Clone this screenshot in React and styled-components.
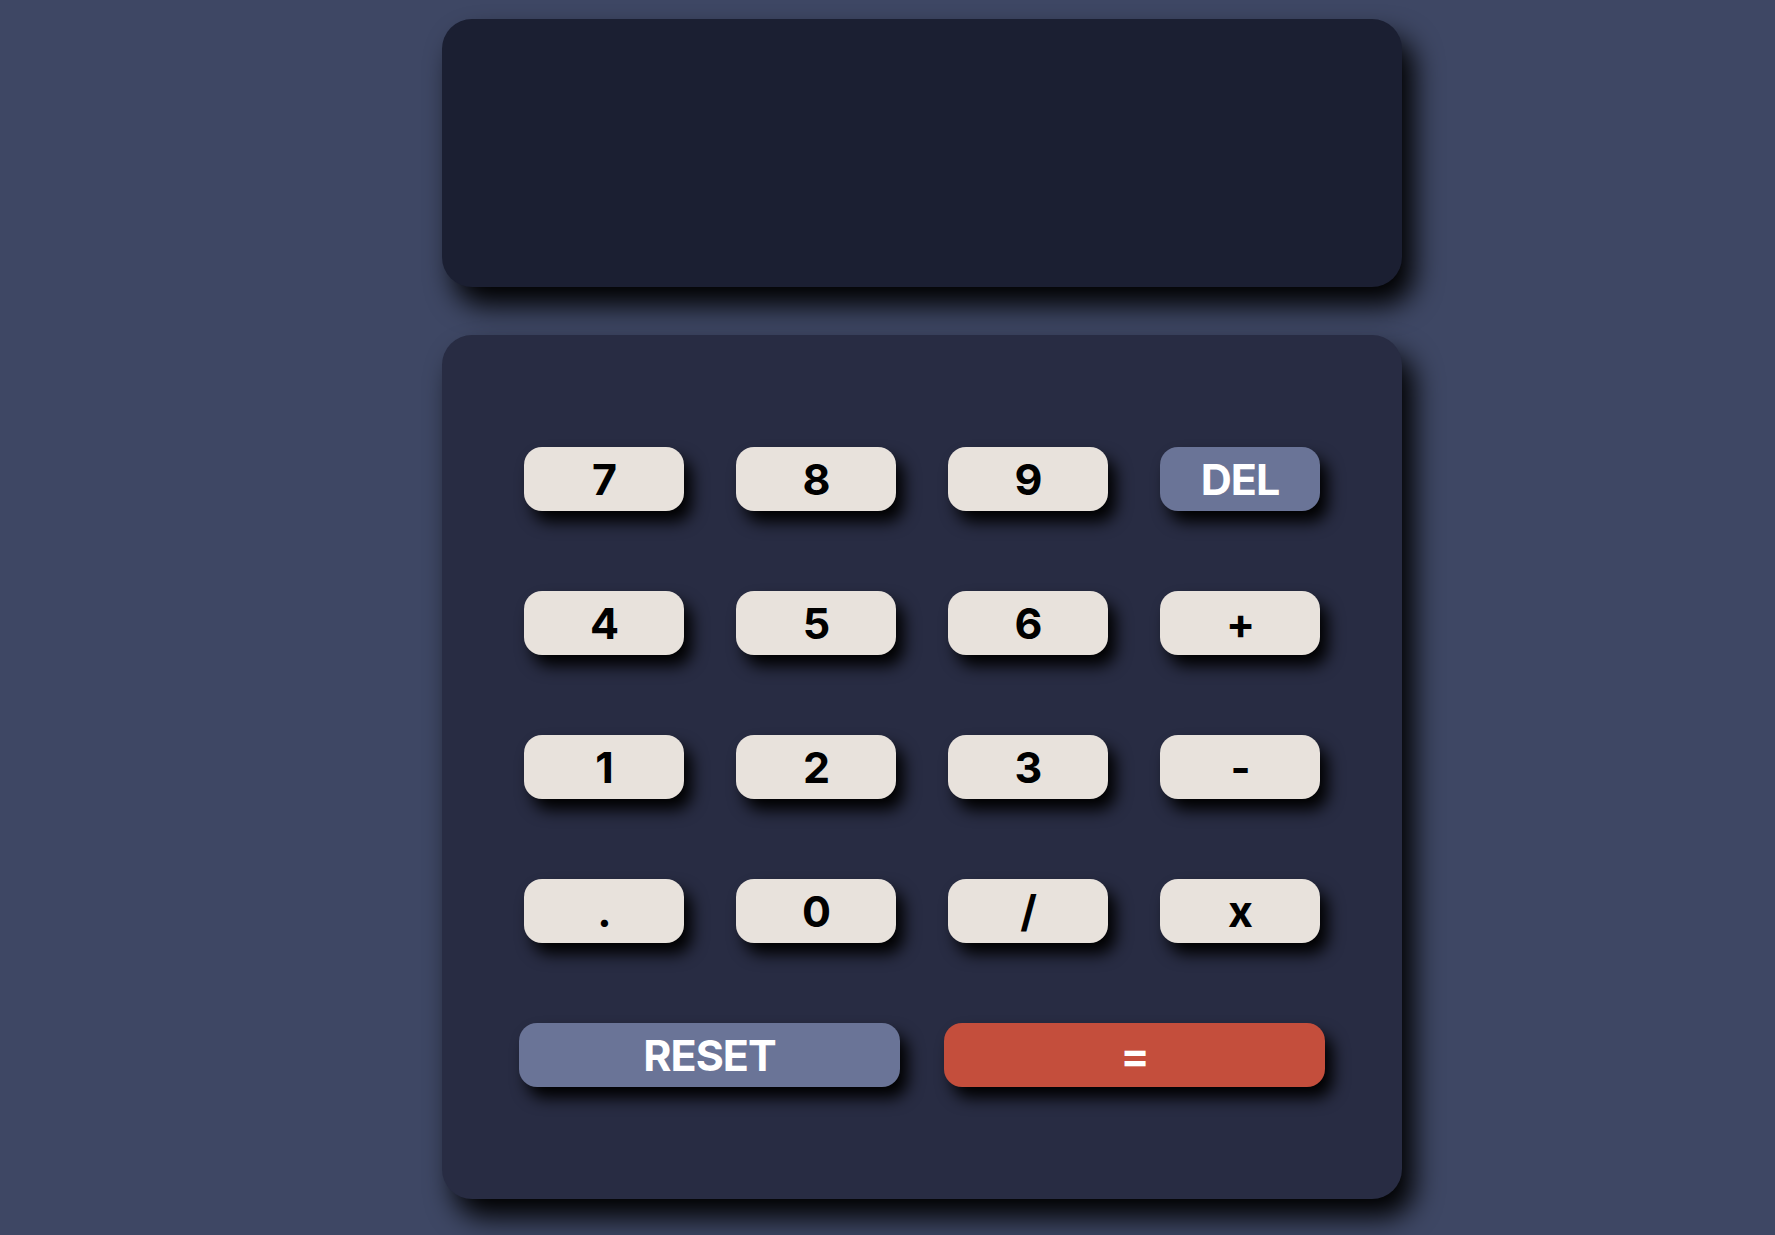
import React from 'react';
import styled, { createGlobalStyle } from 'styled-components';

const GlobalStyle = createGlobalStyle`
    * {
        box-sizing: border-box;
    }
    body {
        margin: 0;
        background: #3e4764;
        font-family: Inter, "Liberation Sans", sans-serif;
    }
`;

const Page = styled.main`
    display: flex;
    flex-direction: column;
    align-items: center;
    gap: 48px;
    padding: 19px 0 0 69px;
    min-height: 1235px;
`;

const Screen = styled.section`
    width: 960px;
    height: 268px;
    background: #1b1f32;
    border-radius: 30px;
    box-shadow: 12px 18px 28px #000;
`;

const Keypad = styled.section`
    display: flex;
    flex-direction: column;
    gap: 80px;
    width: 960px;
    padding: 112px 0;
    background: #282c43;
    border-radius: 30px;
    box-shadow: 12px 18px 28px #000;
`;

const Row = styled.div`
    display: flex;
    justify-content: center;
    gap: ${props => props.$wide ? '44px' : '52px'};
`;

const colors = {
    light: { bg: '#e8e2dc', fg: '#000' },
    blue: { bg: '#6a7497', fg: '#fff' },
    red: { bg: '#c44e3c', fg: '#fff' },
};

const Key = styled.button`
    display: flex;
    align-items: center;
    justify-content: center;
    width: ${props => props.$wide ? '381px' : '160px'};
    height: 64px;
    padding: 0;
    border: none;
    border-radius: 18px;
    background: ${props => colors[props.$kind].bg};
    color: ${props => colors[props.$kind].fg};
    font-family: Inter, "Liberation Sans", sans-serif;
    font-weight: 700;
    font-size: 43px;
    letter-spacing: -1px;
    box-shadow: 8px 11px 16px #000;
    cursor: pointer;
`;

const rows = [
    [['7'], ['8'], ['9'], ['DEL', 'blue']],
    [['4'], ['5'], ['6'], ['+']],
    [['1'], ['2'], ['3'], ['-']],
    [['.'], ['0'], ['/'], ['x']],
];

export default function App() {
    return (
        <>
            <GlobalStyle />
            <Page>
                <Screen />
                <Keypad>
                    {rows.map((row, i) => (
                        <Row key={i}>
                            {row.map(([label, kind = 'light']) => (
                                <Key key={label} $kind={kind}>{label}</Key>
                            ))}
                        </Row>
                    ))}
                    <Row $wide>
                        <Key $wide $kind="blue">RESET</Key>
                        <Key $wide $kind="red">=</Key>
                    </Row>
                </Keypad>
            </Page>
        </>
    );
}
